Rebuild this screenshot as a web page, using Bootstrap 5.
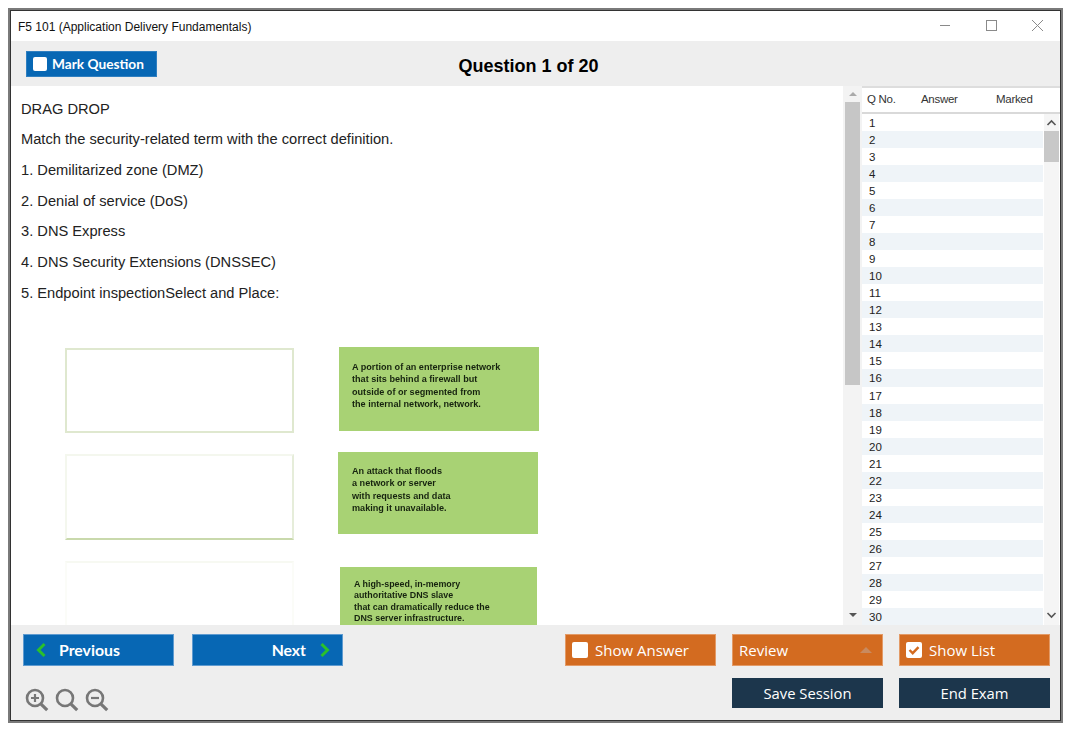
<!DOCTYPE html>
<html lang="en">
<head>
<meta charset="utf-8">
<title>F5 101 (Application Delivery Fundamentals)</title>
<link href="https://cdn.jsdelivr.net/npm/bootstrap@5.3.0/dist/css/bootstrap.min.css" rel="stylesheet">
<style>
html,body{margin:0;background:#fff;overflow:hidden}
body{font-family:"Liberation Sans",Arial,sans-serif;color:#111}
.win-outer{margin:8px 0 0 8px;width:1055px;height:715px;border:2px solid #7a7a7a}
.win-inner{height:100%;border:1px solid #333;background:#fff}
.title-bar{height:30px;padding-left:7px;font-size:12px}
.title-text{padding-top:1px}
.win-ctl{width:46px;height:30px}
.tool-bar{height:45px;background:#eee;padding-left:15px}
.exam-btn{border:1px solid #5f9bd0;border-radius:0;color:#fff;font-family:Lato,sans-serif;padding:0;display:flex;align-items:center}
.mark-btn{width:131px;height:26px;background:#0767b4;border-color:#2f7fc0;font-weight:700;font-size:13.7px;padding:1px 0 0 6px;gap:5px}
.mark-btn .fake-check{width:14px;height:14px}
.q-head{flex:1;text-align:center;font-size:18px;font-weight:700;margin:0;padding-right:160px;color:#000;line-height:1;padding-top:5px}
.main-area{height:539px}
.q-pane{width:832px;overflow:hidden;padding:7.5px 0 0 10px}
.q-pane p{margin:0;font-size:14.67px;line-height:30.7px;color:#222}
.drop-wrap{margin:37.5px 0 0 44px;filter:blur(.45px)}
.drop-row{display:flex;align-items:flex-start}
.drop-box{width:229px;background:#fff;border:2px solid #dfe8cf}
.def-box{background:#a8d274;font-weight:700;font-size:9.1px;line-height:12.4px;color:#16230f}
.scroll-a{width:19px;background:#f3f3f3;padding:3px 2px 0}
.thumb-a{height:283px;background:#c6c6c6;margin-top:6px}
.arrow-up{width:0;height:0;margin:3px auto 0;border:4px solid transparent;border-top:0;border-bottom:4px solid #aaa}
.arrow-dn{width:0;height:0;margin:0 auto;border:4px solid transparent;border-bottom:0;border-top:4px solid #555}
.list-pane{width:198px;border-top:2px solid #ddd;background:#fff}
.list-head{height:26px;border-bottom:2px solid #d9d9d9;font-size:11.5px;color:#333;padding:3px 0 0 5px;letter-spacing:-.3px}
.list-head span:nth-child(1){width:54px}
.list-head span:nth-child(2){width:75px}
.list-body{height:511px;overflow:hidden}
.q-rows{width:180px}
.q-row{height:17.04px;line-height:18px;font-size:11.5px;padding-left:7px;color:#222}
.q-row:nth-child(even){background:#eff4f8}
.scroll-b{width:15px;background:#f5f5f5;margin:0 1px 0 1px}
.thumb-b{height:31px;background:#c8c8c8}
.bottom-bar{height:94px;background:#eee;padding:9px 10px 0 12px}
.act-btn{width:151px;height:32px;font-size:15.8px;font-weight:700}
.blue-btn{background:#0767b4}
.orange-btn{background:#d36b20;border-color:#e39a66;font-family:"Open Sans",sans-serif;font-size:15px;font-weight:400;padding-left:6px;gap:7px}
.navy-btn{background:#1c364c;border-color:#1c364c;height:30px;width:151px;font-family:"Open Sans",sans-serif;font-size:14.8px;justify-content:center}
.fake-check{width:16px;height:16px;background:#fff;border-radius:2px;flex:none;display:block}
.nav-side{width:320px}
.grid-side{display:grid;grid-template-columns:151px 151px 151px;column-gap:16px;row-gap:12px}
.zoom-tools{margin-top:22px;gap:6px;padding-left:2px}
.tri-up{width:0;height:0;border:6px solid transparent;border-top:0;border-bottom:6px solid #c98a5e;margin-left:auto;margin-right:10px}
</style>
</head>
<body>
<div class="win-outer">
<div class="win-inner d-flex flex-column">
  <div class="title-bar d-flex align-items-center flex-shrink-0">
    <span class="flex-grow-1 title-text">F5 101 (Application Delivery Fundamentals)</span>
    <div class="d-flex">
      <svg class="win-ctl" viewBox="0 0 46 30"><path d="M18 14.5h10" stroke="#8a8a8a"/></svg>
      <svg class="win-ctl" viewBox="0 0 46 30"><rect x="18.5" y="9.5" width="10" height="10" fill="none" stroke="#8a8a8a"/></svg>
      <svg class="win-ctl" viewBox="0 0 46 30"><path d="M18 9l11 11M29 9L18 20" stroke="#8a8a8a" fill="none"/></svg>
    </div>
  </div>
  <div class="tool-bar d-flex align-items-center flex-shrink-0">
    <button class="btn exam-btn mark-btn" type="button"><span class="fake-check"></span>Mark Question</button>
    <h1 class="q-head">Question 1 of 20</h1>
  </div>
  <div class="main-area d-flex flex-shrink-0">
    <div class="q-pane">
      <p>DRAG DROP</p>
      <p>Match the security-related term with the correct definition.</p>
      <p>1. Demilitarized zone (DMZ)</p>
      <p>2. Denial of service (DoS)</p>
      <p>3. DNS Express</p>
      <p>4. DNS Security Extensions (DNSSEC)</p>
      <p>5. Endpoint inspectionSelect and Place:</p>
      <div class="drop-wrap">
        <div class="drop-row">
          <div class="drop-box" style="height:85px;margin-top:2px"></div>
          <div class="def-box" style="width:200px;height:84px;margin-left:45px;margin-top:1px;padding:14px 0 0 13px">A portion of an enterprise network<br>that sits behind a firewall but<br>outside of or segmented from<br>the internal network, network.</div>
        </div>
        <div class="drop-row" style="margin-top:19px">
          <div class="drop-box" style="height:86px;margin-top:2px;border-color:#f4f7ee #e6edda #c9d9ac #f4f7ee"></div>
          <div class="def-box" style="width:200px;height:82px;margin-left:44px;padding:13px 0 0 14px">An attack that floods<br>a network or server<br>with requests and data<br>making it unavailable.</div>
        </div>
        <div class="drop-row" style="margin-top:21px">
          <div class="drop-box" style="height:80px;border-color:#f7f9f2 #fbfcf8"></div>
          <div class="def-box" style="width:197px;height:60px;margin-left:46px;margin-top:6px;padding:12px 0 0 14px;font-size:8.9px;line-height:11.4px">A high-speed, in-memory<br>authoritative DNS slave<br>that can dramatically reduce the<br>DNS server infrastructure.</div>
        </div>
      </div>
    </div>
    <div class="scroll-a d-flex flex-column">
      <div class="arrow-up"></div>
      <div class="thumb-a"></div>
      <div class="arrow-dn mt-auto mb-2"></div>
    </div>
    <div class="list-pane d-flex flex-column">
      <div class="list-head d-flex flex-shrink-0"><span>Q No.</span><span>Answer</span><span>Marked</span></div>
      <div class="list-body d-flex">
        <div class="q-rows flex-grow-1">
          <div class="q-row">1</div><div class="q-row">2</div><div class="q-row">3</div><div class="q-row">4</div><div class="q-row">5</div>
          <div class="q-row">6</div><div class="q-row">7</div><div class="q-row">8</div><div class="q-row">9</div><div class="q-row">10</div>
          <div class="q-row">11</div><div class="q-row">12</div><div class="q-row">13</div><div class="q-row">14</div><div class="q-row">15</div>
          <div class="q-row">16</div><div class="q-row">17</div><div class="q-row">18</div><div class="q-row">19</div><div class="q-row">20</div>
          <div class="q-row">21</div><div class="q-row">22</div><div class="q-row">23</div><div class="q-row">24</div><div class="q-row">25</div>
          <div class="q-row">26</div><div class="q-row">27</div><div class="q-row">28</div><div class="q-row">29</div><div class="q-row">30</div>
        </div>
        <div class="scroll-b d-flex flex-column flex-shrink-0">
          <svg class="flex-shrink-0" width="15" height="17" viewBox="0 0 15 17"><path d="M3.5 11l4-4 4 4" fill="none" stroke="#555" stroke-width="1.6"/></svg>
          <div class="thumb-b"></div>
          <svg class="mt-auto mb-1" width="15" height="12" viewBox="0 0 15 12"><path d="M3.5 4l4 4 4-4" fill="none" stroke="#555" stroke-width="1.6"/></svg>
        </div>
      </div>
    </div>
  </div>
  <div class="bottom-bar d-flex justify-content-between flex-grow-1">
    <div class="nav-side">
      <div class="d-flex" style="gap:18px">
        <button class="btn exam-btn act-btn blue-btn" type="button" style="padding-left:11px;gap:12px">
          <svg width="12" height="16" viewBox="0 0 12 16"><path d="M9.5 2L3.5 8l6 6" fill="none" stroke="#2bc02b" stroke-width="3"/></svg>Previous</button>
        <button class="btn exam-btn act-btn blue-btn justify-content-end" type="button" style="padding-right:11px;gap:13px">Next
          <svg width="12" height="16" viewBox="0 0 12 16"><path d="M2.5 2l6 6-6 6" fill="none" stroke="#2bc02b" stroke-width="3"/></svg></button>
      </div>
      <div class="zoom-tools d-flex">
        <svg width="24" height="24" viewBox="0 0 24 24"><g fill="none" stroke="#777" stroke-width="2.6"><circle cx="10" cy="10" r="8"/><path d="M15.8 15.8l6.4 6.4" stroke-width="3.2"/><path d="M6 10h8M10 6v8" stroke-width="2.2"/></g></svg>
        <svg width="24" height="24" viewBox="0 0 24 24"><g fill="none" stroke="#777" stroke-width="2.6"><circle cx="10" cy="10" r="8"/><path d="M15.8 15.8l6.4 6.4" stroke-width="3.2"/></g></svg>
        <svg width="24" height="24" viewBox="0 0 24 24"><g fill="none" stroke="#777" stroke-width="2.6"><circle cx="10" cy="10" r="8"/><path d="M15.8 15.8l6.4 6.4" stroke-width="3.2"/><path d="M6 10h8" stroke-width="2.2"/></g></svg>
      </div>
    </div>
    <div class="grid-side align-content-start">
      <button class="btn exam-btn act-btn orange-btn" type="button"><span class="fake-check"></span>Show Answer</button>
      <button class="btn exam-btn act-btn orange-btn" type="button">Review<span class="tri-up"></span></button>
      <button class="btn exam-btn act-btn orange-btn" type="button"><svg class="flex-shrink-0" width="16" height="16" viewBox="0 0 16 16"><rect width="16" height="16" rx="2" fill="#fff"/><path d="M3.5 8l3.2 3.2 5.8-6" fill="none" stroke="#d36b20" stroke-width="2.4"/></svg>Show List</button>
      <span></span>
      <button class="btn exam-btn navy-btn" type="button">Save Session</button>
      <button class="btn exam-btn navy-btn" type="button">End Exam</button>
    </div>
  </div>
</div>
</div>
<script src="https://cdn.jsdelivr.net/npm/bootstrap@5.3.0/dist/js/bootstrap.bundle.min.js"></script>
</body>
</html>
